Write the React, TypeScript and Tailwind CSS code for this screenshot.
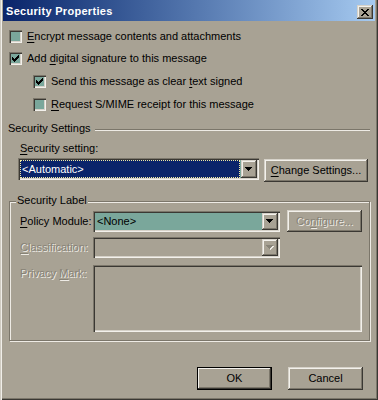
import React from 'react';

const raised =
  'shadow-[inset_-1px_-1px_0_#3a3833,inset_1px_1px_0_#d6d2c9,inset_-2px_-2px_0_#7b766a,inset_2px_2px_0_#f3f1ec]';
const sunken =
  'shadow-[inset_1px_1px_0_#7b766a,inset_2px_2px_0_#3a3833,inset_-1px_-1px_0_#f3f1ec,inset_-2px_-2px_0_#d6d2c9]';
const disabledText = 'text-[#878377] [text-shadow:1px_1px_0_#eeebe5]';

function U({ children }: { children: React.ReactNode }) {
  return <span className="underline decoration-1 underline-offset-[2px]">{children}</span>;
}

function CheckBox({ checked }: { checked?: boolean }) {
  const tops = [3, 4, 5, 4, 3, 2, 1];
  return (
    <div className={'w-[13px] h-[13px] shrink-0 bg-[#7aa79b] flex items-center justify-center ' + sunken}>
      {checked && (
        <svg width="9" height="9" viewBox="0 0 9 9" shapeRendering="crispEdges">
          {tops.map((t, i) => (
            <rect key={i} x={i + 1} y={t} width="1" height="3" fill="#000" />
          ))}
        </svg>
      )}
    </div>
  );
}

function Arrow({ disabled }: { disabled?: boolean }) {
  const rows = [
    [0, 7],
    [1, 5],
    [2, 3],
    [3, 1],
  ];
  const c = disabled ? '#878377' : '#000';
  return (
    <svg width="8" height="5" viewBox="0 0 8 5" shapeRendering="crispEdges">
      {disabled &&
        rows.map(([x, w], i) => <rect key={'s' + i} x={x + 1} y={i + 1} width={w} height="1" fill="#eeebe5" />)}
      {rows.map(([x, w], i) => (
        <rect key={i} x={x} y={i} width={w} height="1" fill={c} />
      ))}
    </svg>
  );
}

function DropButton({ disabled }: { disabled?: boolean }) {
  return (
    <div className={'w-[16px] shrink-0 self-stretch flex items-center justify-center bg-[#a8a294] ' + raised}>
      <Arrow disabled={disabled} />
    </div>
  );
}

function CheckRow({
  checked,
  indent,
  mt,
  children,
}: {
  checked?: boolean;
  indent: string;
  mt: string;
  children: React.ReactNode;
}) {
  return (
    <div className={'flex items-center h-[13px] ' + indent + ' ' + mt}>
      <CheckBox checked={checked} />
      <span className="ml-[5px] leading-[13px] whitespace-nowrap">{children}</span>
    </div>
  );
}

export default function App() {
  return (
    <div
      className="w-[378px] h-[400px] bg-[#a8a294] text-black text-[11px] leading-[13px] font-['Liberation_Sans',Arial,sans-serif] flex flex-col shadow-[inset_1px_0_0_#cfcbc1,inset_2px_0_0_#f0eee9,inset_-1px_-1px_0_#3a3833,inset_-2px_-2px_0_#7b766a] overflow-hidden"
    >
      {/* Title bar */}
      <div className="ml-[3px] w-[372px] h-[21px] shrink-0 bg-linear-to-r from-[#0a246a] to-[#a6caf0] flex items-start justify-between">
        <span className="mt-[5px] ml-[3px] text-white font-bold tracking-[0.3px] whitespace-nowrap">
          Security Properties
        </span>
        <div
          className={
            'mt-[5px] mr-[2px] w-[16px] h-[14px] bg-[#a8a294] flex items-center justify-center ' + raised
          }
        >
          <svg width="8" height="7" viewBox="0 0 8 7" shapeRendering="crispEdges">
            <rect x="0" y="0" width="2" height="1" fill="#000" />
            <rect x="6" y="0" width="2" height="1" fill="#000" />
            <rect x="1" y="1" width="2" height="1" fill="#000" />
            <rect x="5" y="1" width="2" height="1" fill="#000" />
            <rect x="2" y="2" width="4" height="1" fill="#000" />
            <rect x="3" y="3" width="2" height="1" fill="#000" />
            <rect x="2" y="4" width="4" height="1" fill="#000" />
            <rect x="1" y="5" width="2" height="1" fill="#000" />
            <rect x="5" y="5" width="2" height="1" fill="#000" />
            <rect x="0" y="6" width="2" height="1" fill="#000" />
            <rect x="6" y="6" width="2" height="1" fill="#000" />
          </svg>
        </div>
      </div>

      {/* Checkboxes */}
      <CheckRow indent="ml-[9px]" mt="mt-[9px]">
        <U>E</U>ncrypt message contents and attachments
      </CheckRow>
      <CheckRow indent="ml-[9px]" mt="mt-[9px]" checked>
        Add <U>d</U>igital signature to this message
      </CheckRow>
      <CheckRow indent="ml-[33px]" mt="mt-[10px]" checked>
        Send this message as clear <U>t</U>ext signed
      </CheckRow>
      <CheckRow indent="ml-[33px]" mt="mt-[10px]">
        <U>R</U>equest S/MIME receipt for this message
      </CheckRow>

      {/* Security Settings header */}
      <div className="flex items-start h-[13px] ml-[8px] mr-[8px] mt-[11px]">
        <span className="whitespace-nowrap">Security Settings</span>
        <div className="flex-1 ml-[4px] mt-[7px] h-[2px] border-t border-b border-t-[#7b766a] border-b-[#eeebe5]" />
      </div>

      <div className="ml-[20px] mt-[7px] h-[13px]">
        <U>S</U>ecurity setting:
      </div>

      {/* Security setting select + button */}
      <div className="flex items-start ml-[18px] mt-[3px]">
        <div className={'w-[241px] h-[22px] p-[2px] flex bg-[#7aa79b] ' + sunken}>
          <div className="flex-1 mr-[1px] bg-[#0a246a] border border-dotted border-[#efe8a0] text-white leading-[16px] pl-[1px]">
            &lt;Automatic&gt;
          </div>
          <DropButton />
        </div>
        <div
          className={
            'ml-[5px] mt-[1px] w-[104px] h-[23px] flex items-center justify-center whitespace-nowrap ' + raised
          }
        >
          <span>
            <U>C</U>hange Settings...
          </span>
        </div>
      </div>

      {/* Security Label group */}
      <div className="relative ml-[9px] mt-[19px] w-[361px] h-[140px] shrink-0 border border-[#7b766a] shadow-[1px_1px_0_#eeebe5,inset_1px_1px_0_#eeebe5] pt-[8px] pl-[10px] flex flex-col">
        <span className="absolute left-[6px] top-[-8px] px-[1px] bg-[#a8a294] whitespace-nowrap">
          Security Label
        </span>

        {/* Policy Module */}
        <div className="flex items-start h-[22px]">
          <span className="w-[73px] mt-[5px] whitespace-nowrap">
            <U>P</U>olicy Module:
          </span>
          <div className={'mt-[1px] w-[187px] h-[21px] p-[2px] flex bg-[#7aa79b] ' + sunken}>
            <div className="flex-1 pl-[2px] leading-[17px]">&lt;None&gt;</div>
            <DropButton />
          </div>
          <div
            className={
              'ml-[7px] w-[75px] h-[22px] flex items-center justify-center whitespace-nowrap ' +
              raised +
              ' ' +
              disabledText
            }
          >
            <span>
              Co<U>n</U>figure...
            </span>
          </div>
        </div>

        {/* Classification */}
        <div className="flex items-start mt-[5px]">
          <span className={'w-[73px] mt-[4px] whitespace-nowrap ' + disabledText}>
            <U>C</U>lassification:
          </span>
          <div className={'w-[187px] h-[21px] p-[2px] flex justify-end bg-[#a8a294] ' + sunken}>
            <DropButton disabled />
          </div>
        </div>

        {/* Privacy Mark */}
        <div className="flex items-start mt-[7px]">
          <span className={'w-[73px] mt-[2px] whitespace-nowrap ' + disabledText}>
            Privacy <U>M</U>ark:
          </span>
          <div className={'w-[269px] h-[67px] bg-[#a8a294] ' + sunken} />
        </div>
      </div>

      {/* OK / Cancel */}
      <div className="flex justify-end gap-[16px] mr-[15px] mt-[26px]">
        <div className="w-[75px] h-[23px] border border-black">
          <div
            className={
              'w-full h-full flex items-center justify-center shadow-[inset_-1px_-1px_0_#3a3833,inset_1px_1px_0_#f3f1ec,inset_-2px_-2px_0_#7b766a]'
            }
          >
            OK
          </div>
        </div>
        <div className={'w-[75px] h-[23px] flex items-center justify-center ' + raised}>Cancel</div>
      </div>
    </div>
  );
}
